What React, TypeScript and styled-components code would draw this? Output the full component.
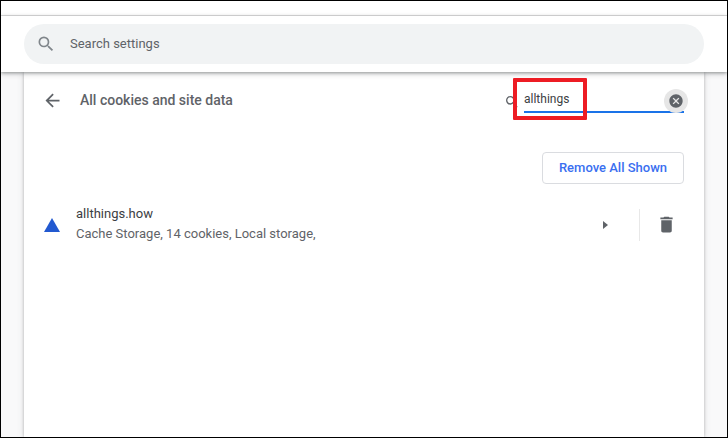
import React from "react";
import styled, { createGlobalStyle } from "styled-components";

const Global = createGlobalStyle`
  html, body { margin: 0; padding: 0; background: #fff; }
  body { font-family: Roboto, "Liberation Sans", sans-serif; }
`;
const Frame = styled.div`
  box-sizing: border-box; width: 728px; height: 438px; border: 1px solid #000;
  background: #f9f9fa; overflow: hidden; display: flex; flex-direction: column; position: relative;
`;
const TopStrip = styled.div`
  height: 14px; flex: none; background: #fff; border-bottom: 1px solid #dfdfdf;
`;
const Header = styled.header`
  height: 56px; flex: none; background: #fff; padding: 8px 23px 0; box-sizing: border-box;
  box-shadow: 0 1px 3px rgba(60,64,67,.45), 0 2px 6px rgba(60,64,67,.2); position: relative; z-index: 2;
`;
const SearchPill = styled.div`
  height: 40px; width: 680px; border-radius: 20px; background: #f1f3f4; display: flex; align-items: center; padding-left: 12px; box-sizing: border-box; gap: 14px;
`;
const PillText = styled.span`
  font-size: 13px; color: #5f6368; margin-top: -2px;
`;
const Body = styled.main`
  flex: 1; padding: 0 23px; min-height: 0;
`;
const Card = styled.section`
  width: 680px; height: 100%; background: #fff; box-shadow: 0 0 3px rgba(60,64,67,.35), 0 0 8px rgba(60,64,67,.1);
  display: flex; flex-direction: column; box-sizing: border-box;
`;
const TitleRow = styled.div`
  height: 56px; flex: none; display: flex; align-items: center; padding: 0 20px 0 18px; position: relative;
`;
const BackIcon = styled.svg`
  flex: none;
`;
const Title = styled.h2`
  margin: 0 0 0 17px; font-size: 14px; font-weight: 500; color: #5f6368; flex: 1;
`;
const FilterBox = styled.div`
  width: 160px; height: 26px; position: relative; display: flex; align-items: center; box-sizing: border-box;
  border-bottom: 2px solid #1a73e8;
`;
const FilterText = styled.span`
  font-size: 12px; color: #3c4043;
`;
const SmallSearch = styled.svg`
  position: absolute; left: -20px; top: 7px; width: 16px; height: 16px;
`;
const ClearBtn = styled.div`
  position: absolute; right: -4px; top: 2px; width: 24px; height: 24px; border-radius: 50%; background: #e6e6e6;
  display: flex; align-items: center; justify-content: center;
`;
const ActionRow = styled.div`
  height: 33px; margin-top: 24px; flex: none; display: flex; justify-content: flex-end; padding-right: 20px;
`;
const OutlineButton = styled.button`
  width: 142px; height: 32px; background: #fff; border: 1px solid #dadce0; border-radius: 4px; color: #3a6ff0;
  font-family: Roboto, "Liberation Sans", sans-serif; font-size: 13px; font-weight: 500; padding: 0 0 2px;
`;
const SiteRow = styled.div`
  display: flex; align-items: center; height: 48px; margin-top: 16px; padding-left: 20px; flex: none;
`;
const Favicon = styled.svg`
  width: 16px; height: 14px; flex: none;
`;
const SiteText = styled.div`
  margin-left: 16px; flex: 1; display: flex; flex-direction: column; gap: 4px; margin-top: -2px;
`;
const SiteName = styled.div`
  font-size: 13px; color: #3c4043; line-height: 16px;
`;
const SiteMeta = styled.div`
  font-size: 13px; color: #5f6368; line-height: 16px;
`;
const ArrowBox = styled.div`
  width: 34px; height: 32px; display: flex; align-items: center; justify-content: center; flex: none; margin-right: 17px;
`;
const Divider = styled.div`
  width: 1px; height: 32px; background: #e8e8e8; flex: none;
`;
const TrashBox = styled.div`
  width: 52px; height: 30px; margin-bottom: 2px; display: flex; align-items: center; justify-content: center; flex: none; margin-right: 12px;
`;
const Highlight = styled.div`
  position: absolute; left: 512px; top: 77px; width: 74px; height: 42px; border: 4px solid #ed1c24; box-sizing: border-box; border-radius: 1px; z-index: 5; pointer-events: none;
`;

export default function App() {
  return (
    <>
      <Global />
      <Frame>
        <TopStrip />
        <Header>
          <SearchPill>
            <svg width="20" height="20" viewBox="0 0 24 24" fill="#80868b"><path d="M15.5 14h-.79l-.28-.27A6.47 6.47 0 0 0 16 9.5 6.5 6.5 0 1 0 9.5 16c1.61 0 3.09-.59 4.23-1.57l.27.28v.79l5 4.99L20.49 19l-4.99-5zm-6 0C7.01 14 5 11.99 5 9.5S7.01 5 9.5 5 14 7.01 14 9.5 11.99 14 9.5 14z"/></svg>
            <PillText>Search settings</PillText>
          </SearchPill>
        </Header>
        <Body>
          <Card>
            <TitleRow>
              <BackIcon width="21" height="21" viewBox="0 0 24 24" fill="#5f6368"><path d="M20 11H7.83l5.59-5.59L12 4l-8 8 8 8 1.41-1.41L7.83 13H20v-2z"/></BackIcon>
              <Title>All cookies and site data</Title>
              <FilterBox>
                <SmallSearch viewBox="0 0 24 24" fill="#5f6368"><path d="M15.5 14h-.79l-.28-.27A6.47 6.47 0 0 0 16 9.5 6.5 6.5 0 1 0 9.5 16c1.61 0 3.09-.59 4.23-1.57l.27.28v.79l5 4.99L20.49 19l-4.99-5zm-6 0C7.01 14 5 11.99 5 9.5S7.01 5 9.5 5 14 7.01 14 9.5 11.99 14 9.5 14z"/></SmallSearch>
                <FilterText>allthings</FilterText>
                <ClearBtn>
                  <svg width="16" height="16" viewBox="0 0 24 24" fill="#5f6368"><path d="M12 2C6.47 2 2 6.47 2 12s4.47 10 10 10 10-4.47 10-10S17.53 2 12 2zm5 13.59L15.59 17 12 13.41 8.41 17 7 15.59 10.59 12 7 8.41 8.41 7 12 10.59 15.59 7 17 8.41 13.41 12 17 15.59z"/></svg>
                </ClearBtn>
              </FilterBox>
            </TitleRow>
            <ActionRow>
              <OutlineButton>Remove All Shown</OutlineButton>
            </ActionRow>
            <SiteRow>
              <Favicon viewBox="0 0 16 14"><path d="M8 0 L16 14 L0 14 Z" fill="#2259d0"/></Favicon>
              <SiteText>
                <SiteName>allthings.how</SiteName>
                <SiteMeta>Cache Storage, 14 cookies, Local storage,</SiteMeta>
              </SiteText>
              <ArrowBox>
                <svg width="20" height="20" viewBox="0 0 20 20" fill="#5f6368"><path d="M8 6 L13 10 L8 14 Z"/></svg>
              </ArrowBox>
              <Divider />
              <TrashBox>
                <svg width="21" height="21" viewBox="0 0 24 24" fill="#5f6368"><path d="M6 19c0 1.1.9 2 2 2h8c1.1 0 2-.9 2-2V7H6v12zM19 4h-3.5l-1-1h-5l-1 1H5v2h14V4z"/></svg>
              </TrashBox>
            </SiteRow>
          </Card>
        </Body>
        <Highlight />
      </Frame>
    </>
  );
}
